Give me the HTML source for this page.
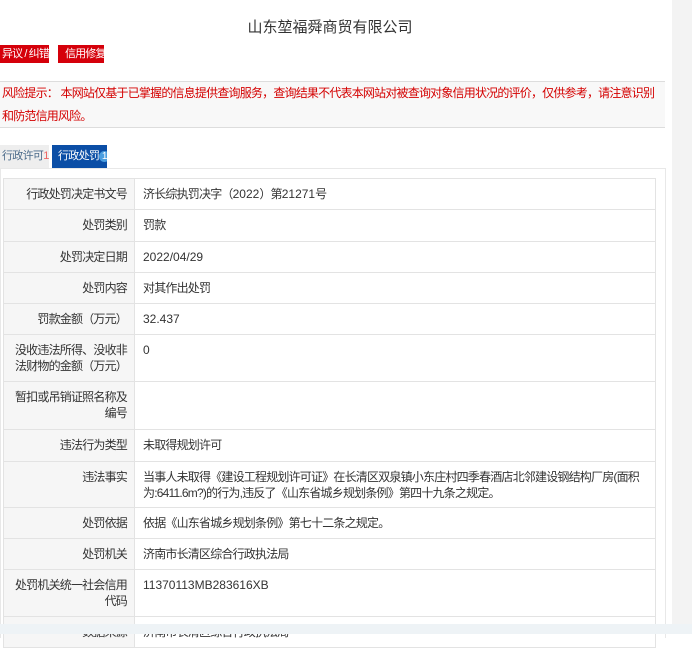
<!DOCTYPE html><html><head><meta charset="utf-8"><style>
*{margin:0;padding:0;box-sizing:border-box}
body{width:692px;height:634px;overflow:hidden;background:#fff;font-family:"Liberation Sans","Noto Sans CJK SC",sans-serif;font-size:12px;color:#333;position:relative;letter-spacing:-0.8px}
.side{position:absolute;left:672px;top:0;width:20px;height:634px;background:#f3f3f3}
.title{position:absolute;top:16px;left:0;width:660px;text-align:center;font-size:15px;color:#333;letter-spacing:0}
.btn{position:absolute;top:45px;height:18px;background:#d5000a;color:#fff;font-size:11px;line-height:18px;white-space:nowrap;overflow:hidden;letter-spacing:-0.9px}
.risk{position:absolute;top:81px;left:0;width:665px;height:47px;background:#f8f8f8;border-top:1px solid #ddd;border-bottom:1px solid #ddd;color:#d40000;line-height:23px;padding-left:2px;white-space:nowrap;font-size:12px}
.tab{position:absolute;top:145px;height:23px;line-height:23px;font-size:11px;white-space:nowrap;overflow:hidden;letter-spacing:-0.7px}
.box{position:absolute;top:168px;left:0;width:666px;height:470px;border:1px solid #e8e8e8;border-bottom:none}
table{position:absolute;top:178px;left:3px;width:653px;border-collapse:collapse;table-layout:fixed}
td{border:1px solid #e3e3e3;vertical-align:top;padding:7px 6px 0 8px;line-height:16px;overflow:hidden}
td.l{width:131px;background:#f6f6f6;text-align:right;padding:7px 7px 0 2px;white-space:nowrap}
.n{letter-spacing:0}
.bot{position:absolute;left:0;top:624px;width:692px;height:10px;background:#eef3f6}
</style></head><body>
<div class="side"></div>
<div class="title">山东堃福舜商贸有限公司</div>
<div class="btn" style="left:0;width:49px;padding-left:2px">异议 / 纠错</div>
<div class="btn" style="left:58px;width:46px;padding-left:7px">信用修复</div>
<div class="risk">风险提示：&nbsp;本网站仅基于已掌握的信息提供查询服务，查询结果不代表本网站对被查询对象信用状况的评价，仅供参考，请注意识别<br>和防范信用风险。</div>
<div class="tab" style="left:0;width:49px;background:#eee;color:#4a6a8a;padding-left:2px">行政许可<span style="color:#e66">1</span></div>
<div class="tab" style="left:52px;width:55px;background:#0b4ea6;color:#fff;padding-left:6px">行政处罚<span style="display:inline-block;width:11px;height:11px;border-radius:50%;background:#4a9ee0;font-size:10px;line-height:11px;text-align:center;letter-spacing:0">1</span></div>
<div class="box"></div>
<table>
<colgroup><col style="width:131px"><col></colgroup>
<tr style="height:31px"><td class="l">行政处罚决定书文号</td><td>济长综执罚决字（<span class="n">2022</span>）第<span class="n">21271</span>号</td></tr>
<tr style="height:32px"><td class="l">处罚类别</td><td>罚款</td></tr>
<tr style="height:31px"><td class="l">处罚决定日期</td><td class="n">2022/04/29</td></tr>
<tr style="height:31px"><td class="l">处罚内容</td><td>对其作出处罚</td></tr>
<tr style="height:31px"><td class="l">罚款金额（万元）</td><td class="n">32.437</td></tr>
<tr style="height:47px"><td class="l">没收违法所得、没收非<br>法财物的金额（万元）</td><td>0</td></tr>
<tr style="height:48px"><td class="l">暂扣或吊销证照名称及<br>编号</td><td></td></tr>
<tr style="height:32px"><td class="l">违法行为类型</td><td>未取得规划许可</td></tr>
<tr style="height:46px"><td class="l">违法事实</td><td>当事人未取得《建设工程规划许可证》在长清区双泉镇小东庄村四季春酒店北邻建设钢结构厂房(面积为:6411.6m?)的行为,违反了《山东省城乡规划条例》第四十九条之规定。</td></tr>
<tr style="height:31px"><td class="l">处罚依据</td><td>依据《山东省城乡规划条例》第七十二条之规定。</td></tr>
<tr style="height:31px"><td class="l">处罚机关</td><td>济南市长清区综合行政执法局</td></tr>
<tr style="height:47px"><td class="l">处罚机关统一社会信用<br>代码</td><td class="n">11370113MB283616XB</td></tr>
<tr style="height:31px"><td class="l">数据来源</td><td>济南市长清区综合行政执法局</td></tr>
</table>
<div class="bot"></div>
</body></html>
